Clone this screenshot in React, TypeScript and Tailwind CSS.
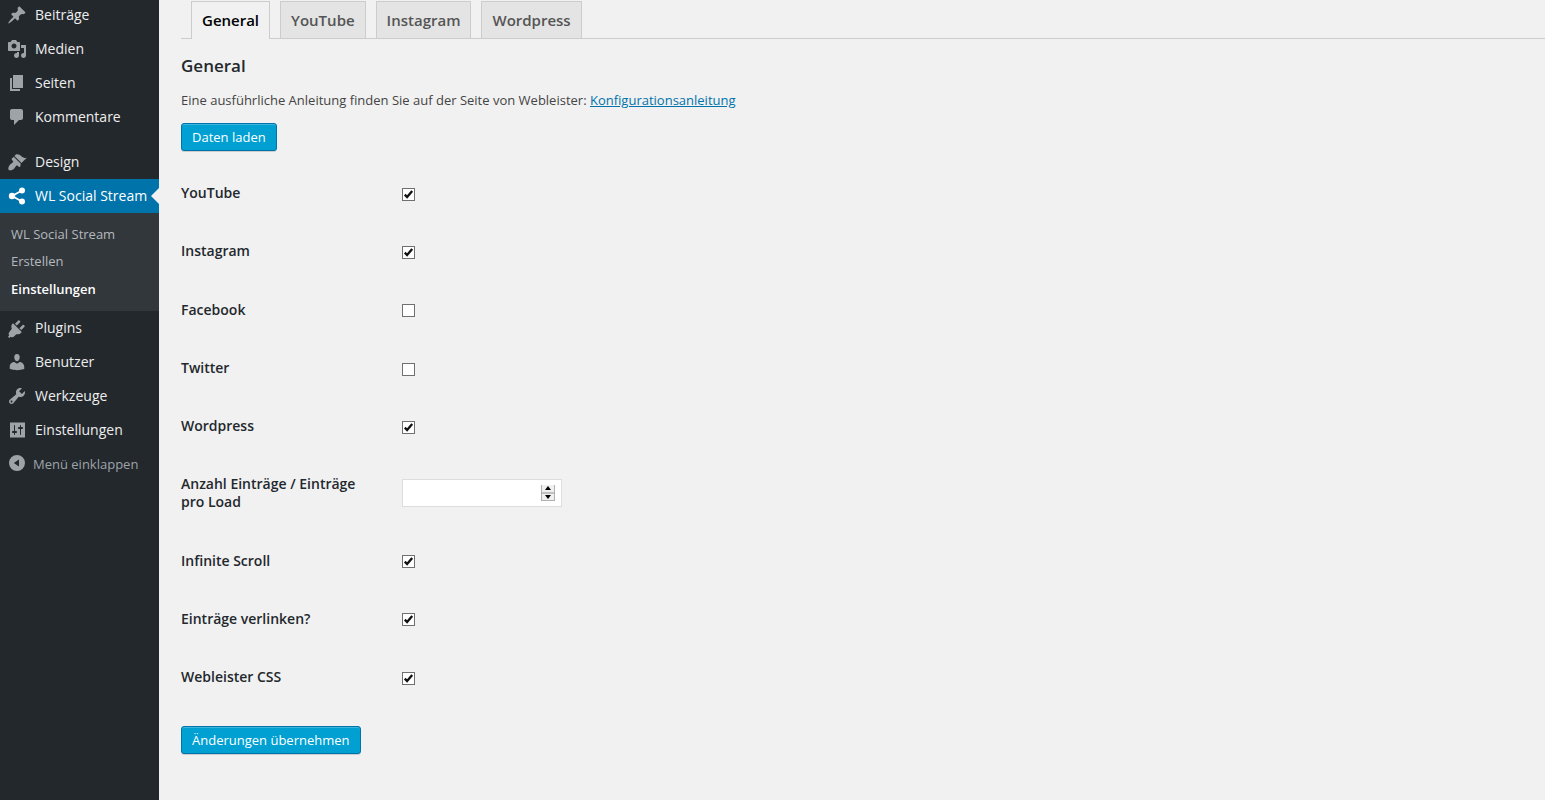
import type { ReactNode } from "react";

const icons: Record<string, ReactNode> = {
  post: <path d="M10.44 3.02l1.82-1.82 6.36 6.35-1.83 1.82c-1.05-.68-2.48-.57-3.41.36l-.75.75c-.92.93-1.04 2.35-.35 3.41l-1.83 1.82-2.41-2.41-2.8 2.79c-.42.42-3.38 2.71-3.8 2.29s1.86-3.39 2.28-3.81l2.79-2.79L4.1 9.36l1.83-1.82c1.05.69 2.48.57 3.4-.36l.75-.75c.93-.92 1.05-2.35.36-3.41z" />,
  media: <path d="M13 11V4c0-.55-.45-1-1-1h-1.67L9 1H5L3.67 3H2c-.55 0-1 .45-1 1v7c0 .55.45 1 1 1h10c.55 0 1-.45 1-1zM7 4.5c1.38 0 2.5 1.12 2.5 2.5S8.38 9.5 7 9.5 4.5 8.38 4.5 7 5.62 4.5 7 4.5zM14 6h5v10.5c0 1.38-1.12 2.5-2.5 2.5S14 17.88 14 16.5s1.12-2.5 2.5-2.5c.17 0 .34.02.5.05V9h-3V6zm-4 8.05V13h2v3.5c0 1.38-1.12 2.5-2.5 2.5S7 17.88 7 16.5 8.12 14 9.5 14c.17 0 .34.02.5.05z" />,
  page: <path d="M6 15V2h10v13H6zm-1 1h8v2H3V5h2v11z" />,
  comments: <path d="M5 2h9c1.1 0 2 .9 2 2v7c0 1.1-.9 2-2 2h-2l-5 5v-5H5c-1.1 0-2-.9-2-2V4c0-1.1.9-2 2-2z" />,
  design: <path d="M14.48 11.06L7.41 3.99l1.5-1.5c.5-.56 2.3-.47 3.51.32 1.21.8 1.43 1.28 2.91 2.1 1.18.64 2.45 1.26 4.45.85zm-.71.71L6.7 4.7 4.93 6.47c-.39.39-.39 1.02 0 1.41l1.06 1.06c.39.39.39 1.03 0 1.42-.6.6-1.43 1.11-2.21 1.69-.35.26-.7.53-1.01.84-1.34 1.34-1.88 4.2-1.03 5.05.84.84 3.7.3 5.04-1.04.31-.31.58-.66.84-1.01.58-.78 1.09-1.61 1.69-2.21.39-.39 1.03-.39 1.42 0l1.06 1.06c.39.39 1.02.39 1.41 0z" />,
  share: (
    <>
      <circle cx="15" cy="4.5" r="3" />
      <circle cx="15" cy="15.5" r="3" />
      <circle cx="5" cy="10" r="3.2" />
      <path d="M5 10l10-5.500M5 10l10 5.500" stroke="currentColor" strokeWidth="1.800" fill="none" />
    </>
  ),
  plugins: <path d="M13.11 4.36L9.87 7.6 8 5.73l3.24-3.24c.35-.34 1.05-.2 1.56.32.52.51.66 1.21.31 1.55zm4.4 4.4l-3.24 3.24-1.87-1.87 3.24-3.24c.34-.35 1.04-.21 1.55.31.52.51.66 1.21.32 1.56zM5.11 6.13l.91-.9 8.76 8.76-.9.91c-1.3 1.3-3.1 1.7-4.6 1.3L7 18.6c-.9.9-2.300 1-3.300.2L2.300 20 1 18.700l1.200-1.400c-.8-1-.7-2.400.2-3.300l2.400-3.200c-.4-1.500-.99-3.370.31-4.670z" />,
  users: <path d="M10 9.25c-2.27 0-2.73-3.44-2.73-3.44C7 4.02 7.82 2 9.97 2c2.16 0 2.98 2.02 2.71 3.81 0 0-.41 3.44-2.68 3.44zm0 2.57L12.72 10c2.39 0 4.52 2.33 4.52 4.53v2.49s-3.65 1.13-7.24 1.13c-3.65 0-7.24-1.13-7.24-1.13v-2.49c0-2.25 1.94-4.48 4.47-4.48z" />,
  tools: <path d="M16.68 9.77c-1.34 1.34-3.3 1.67-4.95.99l-5.41 6.52c-.99.99-2.59.99-3.57 0-.99-.98-.99-2.58 0-3.57l6.52-5.42c-.68-1.65-.35-3.61.99-4.95 1.28-1.28 3.12-1.62 4.72-1.06l-2.89 2.89 2.82 2.82 2.86-2.87c.53 1.58.18 3.39-1.09 4.65zM3.81 16.21c.4.39 1.04.39 1.43 0 .4-.4.4-1.04 0-1.43-.39-.4-1.03-.4-1.43 0-.39.39-.39 1.03 0 1.430z" />,
  settings: <path d="M18 17.500V2.500H3v15zM8 11h1c.55 0 1 .45 1 1s-.45 1-1 1H8v1.500c0 .28-.22.5-.5.5s-.5-.22-.5-.5V13H6c-.55 0-1-.45-1-1s.45-1 1-1h1V5.500c0-.28.22-.5.5-.5s.5.22.5.5V11zm5-2h-1c-.55 0-1-.45-1-1s.45-1 1-1h1V5.500c0-.28.22-.5.5-.5s.5.22.5.5V7h1c.55 0 1 .45 1 1s-.45 1-1 1h-1v5.500c0 .28-.22.5-.5.5s-.5-.22-.5-.5V9z" />,
  collapse: <path d="M10 2a8 8 0 1 1 0 16 8 8 0 0 1 0-16zm2 4.500L6.800 10l5.200 3.500z" fillRule="evenodd" />,
};

function Icon({ name }: { name: string }) {
  return (
    <svg viewBox="0 0 20 20" fill="currentColor" className="w-5 h-5 shrink-0">
      {icons[name]}
    </svg>
  );
}

function MenuItem({ icon, label, up }: { icon: string; label: string; up?: boolean }) {
  return (
    <div className="flex items-center h-[34px] pl-[7px] text-[14px] text-[#eeeeee]">
      <span className="text-[#9ea3a8] flex w-5 mr-2">
        <Icon name={icon} />
      </span>
      <span className={up ? "mb-[2px]" : ""}>{label}</span>
    </div>
  );
}

function Sidebar() {
  return (
    <aside className="w-[159px] shrink-0 bg-[#23282d] h-[800px]">
      <div className="-mt-[2px]">
        <MenuItem icon="post" label="Beiträge" up />
        <MenuItem icon="media" label="Medien" up />
        <MenuItem icon="page" label="Seiten" up />
        <MenuItem icon="comments" label="Kommentare" up />
        <div className="h-[11px]" />
        <MenuItem icon="design" label="Design" up />
        <div className="relative flex items-center h-[34px] pl-[7px] bg-[#0073aa] text-[14px] text-white">
          <span className="flex w-5 mr-2">
            <Icon name="share" />
          </span>
          <span className="mb-[2px]">WL Social Stream</span>
          <span className="absolute right-0 top-[9px] border-[8px] border-transparent border-r-[#f1f1f1]" />
        </div>
        <div className="bg-[#32373c] pt-[7.700px] pb-[7.800px] text-[13px] text-[#b4b9be]">
          <div className="h-[27.500px] flex items-center pl-[11px]">WL Social Stream</div>
          <div className="h-[27.500px] flex items-center pl-[11px]">Erstellen</div>
          <div className="h-[27.500px] flex items-center pl-[11px] font-semibold text-white">Einstellungen</div>
        </div>
        <MenuItem icon="plugins" label="Plugins" />
        <MenuItem icon="users" label="Benutzer" />
        <MenuItem icon="tools" label="Werkzeuge" />
        <MenuItem icon="settings" label="Einstellungen" />
        <div className="flex items-center h-[34px] pl-[7px] text-[13px] text-[#9ea3a8]">
          <span className="flex w-5 mr-[6px] -mt-[2px]">
            <Icon name="collapse" />
          </span>
          <span className="mt-[2px]">Menü einklappen</span>
        </div>
      </div>
    </aside>
  );
}

function Tab({ label, active }: { label: string; active?: boolean }) {
  return (
    <div
      className={
        active
          ? "h-[38px] px-[10px] pb-[1px] flex items-center border border-b-0 border-[#cccccc] bg-[#f1f1f1] text-[15px] font-semibold text-[#000000]"
          : "h-[37px] px-[10px] flex items-center border border-b-0 border-[#cccccc] bg-[#e4e4e4] text-[15px] font-semibold text-[#555555]"
      }
    >
      {label}
    </div>
  );
}

function BlueButton({ children }: { children: ReactNode }) {
  return (
    <button className="h-[28px] px-[10px] pt-[1px] rounded-[3px] border border-[#0073aa] bg-[#00a0d2] text-[13px] text-white shadow-[inset_0_1px_0_rgba(120,200,230,0.5),0_1px_0_rgba(0,0,0,0.15)]">
      {children}
    </button>
  );
}

function CheckRow({ label, checked }: { label: string; checked?: boolean }) {
  return (
    <div className="flex py-5">
      <div className="w-[221px] shrink-0 pr-[40px] text-[14px] leading-[1.3] font-semibold text-[#23282d]">{label}</div>
      <span className="mt-[3.700px] w-[13px] h-[13px] flex items-center justify-center border border-[#707070] bg-white">
        {checked && (
          <svg viewBox="0 0 11 11" className="w-[11px] h-[11px]">
            <path d="M1.800 5.600l2.300 2.400L9.200 2" fill="none" stroke="#111111" strokeWidth="2.300" />
          </svg>
        )}
      </span>
    </div>
  );
}

export default function App() {
  return (
    <div className="flex h-[800px] overflow-hidden bg-[#f1f1f1] font-['Open_Sans',sans-serif]">
      <Sidebar />
      <main className="flex-1 pl-[22px]">
        <div className="flex gap-[10px] pl-[10px] pt-px border-b border-[#cccccc] h-[39px]">
          <Tab label="General" active />
          <Tab label="YouTube" />
          <Tab label="Instagram" />
          <Tab label="Wordpress" />
        </div>
        <h2 className="mt-[15px] text-[17px] leading-6 font-semibold text-[#23282d]">General</h2>
        <p className="mt-[13px] text-[13px] leading-[18px] text-[#444444]">
          Eine ausführliche Anleitung finden Sie auf der Seite von Webleister:{" "}
          <a className="text-[#0073aa] underline">Konfigurationsanleitung</a>
        </p>
        <div className="mt-[14px]">
          <BlueButton>Daten laden</BlueButton>
        </div>
        <div className="mt-[13.250px]">
          <CheckRow label="YouTube" checked />
          <CheckRow label="Instagram" checked />
          <CheckRow label="Facebook" />
          <CheckRow label="Twitter" />
          <CheckRow label="Wordpress" checked />
          <div className="flex pt-5 pb-[20.400px]">
            <div className="w-[221px] shrink-0 pr-[20px] text-[14px] leading-[18px] font-semibold text-[#23282d]">
              Anzahl Einträge / Einträge pro Load
            </div>
            <div className="relative mt-[4px] w-[160px] h-[28px]">
              <input className="w-full h-full border border-[#dddddd] bg-white outline-none" readOnly />
              <span className="absolute right-[7px] top-[6px] w-[14px] h-[16px] flex flex-col border-x border-b border-[#b0b0b0] bg-[#f0f0f0]">
                <span className="flex-1 flex items-center justify-center border-b-2 border-[#c0c0c0]">
                  <span className="border-x-[3px] border-b-[4px] border-x-transparent border-b-black" />
                </span>
                <span className="flex-1 flex items-center justify-center">
                  <span className="border-x-[3px] border-t-[4px] border-x-transparent border-t-black" />
                </span>
              </span>
            </div>
          </div>
          <CheckRow label="Infinite Scroll" checked />
          <CheckRow label="Einträge verlinken?" checked />
          <CheckRow label="Webleister CSS" checked />
        </div>
        <div className="mt-[20px]">
          <BlueButton>Änderungen übernehmen</BlueButton>
        </div>
      </main>
    </div>
  );
}
